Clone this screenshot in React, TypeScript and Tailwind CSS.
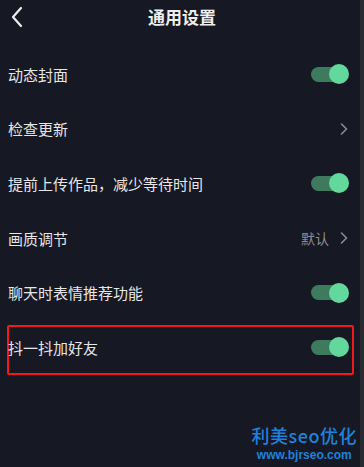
import React from 'react'

type Row = { label: string; kind: 'toggle' | 'arrow'; value?: string; highlight?: boolean }

const rows: Row[] = [
  { label: '动态封面', kind: 'toggle' },
  { label: '检查更新', kind: 'arrow' },
  { label: '提前上传作品，减少等待时间', kind: 'toggle' },
  { label: '画质调节', kind: 'arrow', value: '默认' },
  { label: '聊天时表情推荐功能', kind: 'toggle' },
  { label: '抖一抖加好友', kind: 'toggle', highlight: true },
]

const Toggle = () => (
  <div className="relative w-[38px] h-[20px] flex items-center">
    <div className="w-[34px] h-[15px] rounded-full bg-[#3e7b5e]" />
    <div className="absolute right-0 top-0 w-[20px] h-[20px] rounded-full bg-[#62d89c]" />
  </div>
)

const Chevron = () => (
  <svg width="8" height="12" viewBox="0 0 8 12" fill="none">
    <path d="M1.5 1l5 5-5 5" stroke="#8b8c93" strokeWidth="1.6" strokeLinecap="round" strokeLinejoin="round" />
  </svg>
)

const RowContent = ({ r }: { r: Row }) => (
  <>
    <span className="text-[15px] text-[#e6e6e8] leading-none">{r.label}</span>
    {r.kind === 'toggle' ? (
      <Toggle />
    ) : (
      <div className="flex items-center gap-[11px] pr-[1px]">
        {r.value && <span className="text-[14px] text-[#8b8c93] leading-none">{r.value}</span>}
        <Chevron />
      </div>
    )}
  </>
)

export default function App() {
  return (
    <div
      className="w-[364px] h-[467px] bg-[#161823] flex flex-col relative overflow-hidden"
      style={{ fontFamily: '"Noto Sans CJK SC", "Noto Sans", sans-serif' }}
    >
      <div className="absolute right-0 top-0 w-[4px] h-full bg-[#2a2b31]" />
      <div className="h-[34px] flex items-center relative">
        <svg className="absolute left-[10px] top-[6px]" width="14" height="22" viewBox="0 0 14 22" fill="none">
          <path d="M11 2L3 11l8 9" stroke="#ececec" strokeWidth="2.2" strokeLinecap="round" strokeLinejoin="round" />
        </svg>
        <div className="w-full text-center text-[17px] font-bold text-[#eeeeee] leading-none pb-[1px]">通用设置</div>
      </div>
      <div className="flex flex-col mt-[13px]">
        {rows.map((r) =>
          r.highlight ? (
            <div key={r.label} className="h-[54.6px] pt-[5px] pl-[7px] pr-[10px]">
              <div className="h-[50px] border-2 border-[#f0191d] rounded-[2px] flex items-center justify-between pb-[5px] pl-0 pr-[3px] [&>span]:-ml-[1px]">
                <RowContent r={r} />
              </div>
            </div>
          ) : (
            <div key={r.label} className="h-[54.6px] flex items-center justify-between pl-[8px] pr-[15px]">
              <RowContent r={r} />
            </div>
          )
        )}
      </div>
      <div className="absolute right-[7px] bottom-[6px] flex flex-col items-center text-[#1e82dc]">
        <div className="text-[18px] leading-none font-medium tracking-[0.5px]">利美seo优化</div>
        <div className="text-[12px] leading-none font-bold mt-[5px]" style={{ fontFamily: '"Liberation Sans", Arial, sans-serif' }}>www.bjrseo.com</div>
      </div>
    </div>
  )
}
